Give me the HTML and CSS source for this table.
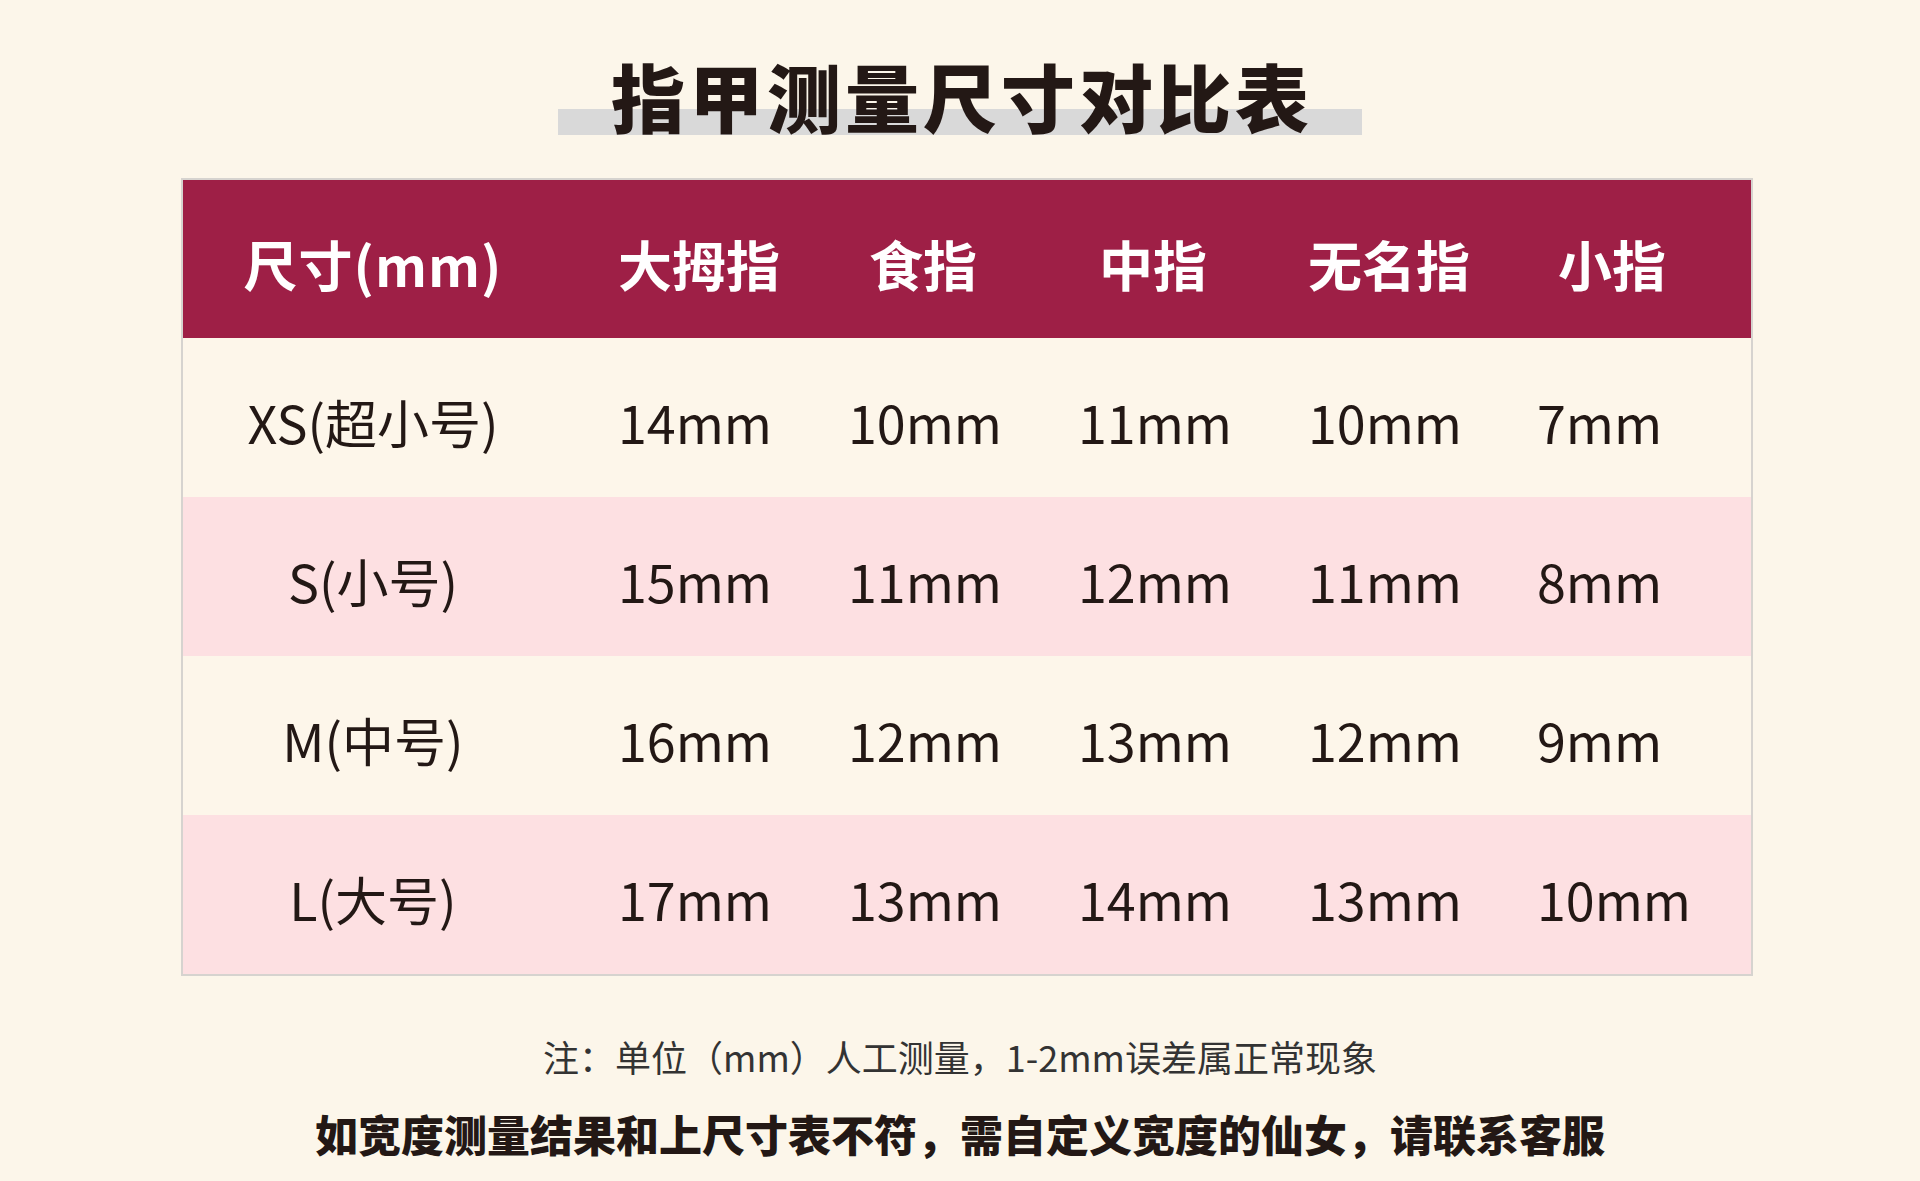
FILE: index.html
```html
<!DOCTYPE html>
<html lang="zh-CN">
<head>
<meta charset="utf-8">
<title>指甲测量尺寸对比表</title>
<link rel="stylesheet" href="styles.css">
</head>
<body>
<div class="page">
  <h1 class="title">指甲测量尺寸对比表</h1>
  <div class="table">
    <div class="row head">
      <div class="c first">尺寸(mm)</div>
      <div class="c"><span class="hc">大拇指</span></div>
      <div class="c"><span class="hc">食指</span></div>
      <div class="c"><span class="hc">中指</span></div>
      <div class="c"><span class="hc">无名指</span></div>
      <div class="c"><span class="hc">小指</span></div>
    </div>
    <div class="row cream">
      <div class="c first">XS(超小号)</div>
      <div class="c">14mm</div><div class="c">10mm</div><div class="c">11mm</div><div class="c">10mm</div><div class="c">7mm</div>
    </div>
    <div class="row pink">
      <div class="c first">S(小号)</div>
      <div class="c">15mm</div><div class="c">11mm</div><div class="c">12mm</div><div class="c">11mm</div><div class="c">8mm</div>
    </div>
    <div class="row cream">
      <div class="c first">M(中号)</div>
      <div class="c">16mm</div><div class="c">12mm</div><div class="c">13mm</div><div class="c">12mm</div><div class="c">9mm</div>
    </div>
    <div class="row pink">
      <div class="c first">L(大号)</div>
      <div class="c">17mm</div><div class="c">13mm</div><div class="c">14mm</div><div class="c">13mm</div><div class="c">10mm</div>
    </div>
  </div>
  <p class="note">注：单位（mm）人工测量，1-2mm误差属正常现象</p>
  <p class="contact">如宽度测量结果和上尺寸表不符，需自定义宽度的仙女，请联系客服</p>
</div>
</body>
</html>
```

FILE: styles.css
```css
* { box-sizing: border-box; }
html, body { margin: 0; padding: 0; }
body {
  background: #fcf6ea;
  font-family: "Noto Sans CJK SC", "Noto Sans", sans-serif;
  color: #231815;
  width: 1920px;
  height: 1181px;
  overflow: hidden;
}
.page {
  display: flex;
  flex-direction: column;
  align-items: center;
  padding-top: 55px;
}
.title {
  margin: 0;
  width: 804px;
  height: 85px;
  text-align: center;
  font-size: 74px;
  font-weight: 900;
  line-height: 80px;
  letter-spacing: 4px;
  padding-left: 4px;
  color: #231815;
  background: linear-gradient(to bottom, transparent 0, transparent 54px, #d9d9d9 54px, #d9d9d9 80px, transparent 80px);
}
.table {
  margin-top: 38px;
  margin-left: 14px;
  width: 1572px;
  border: 2px solid #d6d3cf;
  display: flex;
  flex-direction: column;
}
.row {
  display: grid;
  grid-template-columns: 435px 230px 230px 230px 229px 1fr;
  height: 159px;
  align-items: center;
}
.row.head { height: 158px; background: #9e1f46; color: #ffffff; }
.row.cream { background: #fdf6ea; }
.row.pink { background: #fde0e2; }
.c {
  font-size: 52px;
  font-weight: 400;
  line-height: 60px;
  white-space: nowrap;
  padding-top: 8px;
}
.c.first { text-align: center; padding-right: 55px; }
.head .c { font-weight: 700; font-size: 54px; padding-top: 10px; }
.head .c.first { letter-spacing: 1px; }
.hc { display: inline-block; width: 150px; text-align: center; }
.note {
  margin: 58px 0 0;
  font-size: 36px;
  line-height: 44px;
  color: #333333;
}
.contact {
  margin: 30px 0 0;
  font-size: 43px;
  font-weight: 900;
  line-height: 50px;
  color: #231815;
}
```
